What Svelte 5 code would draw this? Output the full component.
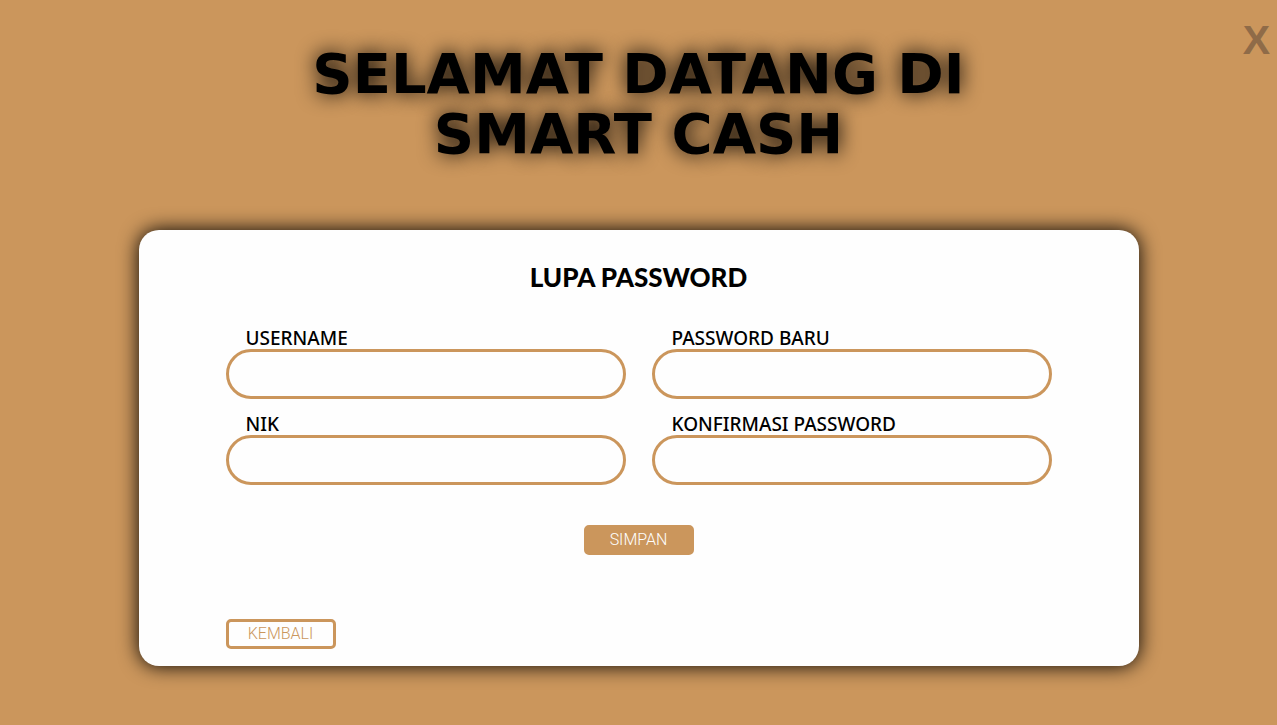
<script>
  let username = $state('');
  let nik = $state('');
  let password = $state('');
  let confirmation = $state('');
</script>

<div class="page">
  <button class="close" type="button">X</button>

  <h1>SELAMAT DATANG DI<br />SMART CASH</h1>

  <main class="card">
    <h2>LUPA PASSWORD</h2>
    <form onsubmit={(e) => e.preventDefault()}>
      <div class="fields">
        <div class="field">
          <label for="username">USERNAME</label>
          <input id="username" type="text" bind:value={username} />
        </div>
        <div class="field">
          <label for="password">PASSWORD BARU</label>
          <input id="password" type="password" bind:value={password} />
        </div>
        <div class="field">
          <label for="nik">NIK</label>
          <input id="nik" type="text" bind:value={nik} />
        </div>
        <div class="field">
          <label for="confirmation">KONFIRMASI PASSWORD</label>
          <input id="confirmation" type="password" bind:value={confirmation} />
        </div>
      </div>
      <button class="action save" type="submit">SIMPAN</button>
      <button class="action back" type="button">KEMBALI</button>
    </form>
  </main>
</div>

<style>
  :global(body) {
    margin: 0;
    background: #cb965c;
  }

  .page {
    box-sizing: border-box;
    min-height: 100vh;
    padding: 44px 24px 48px;
    display: flex;
    flex-direction: column;
    align-items: center;
    color: #000;
  }

  .close {
    position: absolute;
    top: 16px;
    right: 7px;
    padding: 0;
    border: 0;
    background: none;
    color: #8f6b48;
    font: 700 41px/48px "Liberation Sans", Arial, sans-serif;
    cursor: pointer;
  }

  h1 {
    margin: 0 0 66px;
    font: 700 56px/60px "DejaVu Sans", sans-serif;
    text-align: center;
    text-shadow: 0 0 20px #000;
  }

  .card {
    box-sizing: border-box;
    width: 100%;
    max-width: 1000px;
    padding: 30px 24px 17px;
    border-radius: 20px;
    background: #fefefe;
    box-shadow: 0 0 20px #000;
  }

  h2 {
    margin: 0 0 33px;
    font: 900 26px/34px Lato, sans-serif;
    text-align: center;
  }

  form {
    max-width: 826px;
    margin: 0 auto;
    display: flex;
    flex-direction: column;
  }

  .fields {
    display: grid;
    grid-template-columns: 1fr 1fr;
    gap: 14px 26px;
  }

  .field {
    display: flex;
    flex-direction: column;
    min-width: 0;
  }

  label {
    padding-left: 20px;
    font: 500 19px/22px "Noto Sans", sans-serif;
  }

  input {
    box-sizing: border-box;
    width: 100%;
    height: 50px;
    padding: 0 20px;
    border: 3px solid #cb965c;
    border-radius: 25px;
    background: #fefefe;
    font: 500 19px/22px "Noto Sans", sans-serif;
    outline: 0;
  }

  .action {
    box-sizing: border-box;
    width: 110px;
    height: 30px;
    padding: 0;
    border: 3px solid #cb965c;
    border-radius: 5px;
    font: 300 16px/24px Roboto, sans-serif;
    cursor: pointer;
  }

  .save {
    align-self: center;
    margin-top: 40px;
    background: #cb965c;
    color: #fefefe;
  }

  .back {
    align-self: flex-start;
    margin-top: 64px;
    background: #fefefe;
    color: #cb965c;
  }
</style>
